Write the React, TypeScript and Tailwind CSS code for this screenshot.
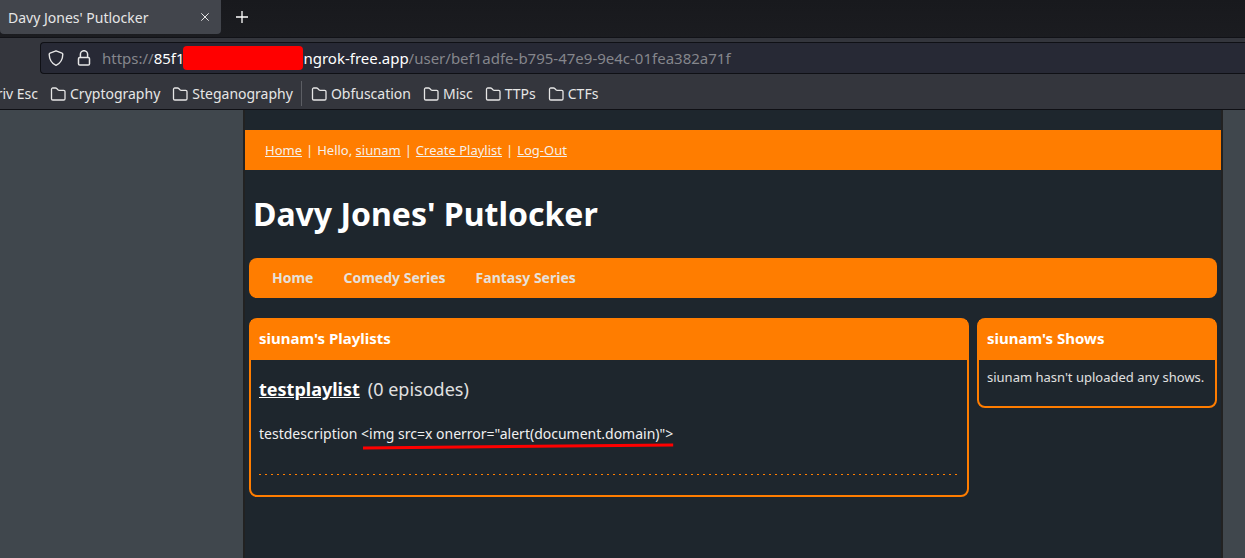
import type { ReactNode } from 'react';

function FolderIcon() {
  return (
    <svg className="h-4 w-4 shrink-0" viewBox="0 0 16 16" fill="none" stroke="currentColor" strokeWidth="1.300" strokeLinejoin="round" aria-hidden="true">
      <path d="M1.500 12.700V3.300A1.300 1.300 0 0 1 2.800 2h2.700c.5 0 .9.2 1.200.5L8.200 4c.2.3.6.4.9.4h4.600A1.300 1.300 0 0 1 15 5.700v7a1.300 1.300 0 0 1-1.300 1.300H2.800a1.300 1.300 0 0 1-1.300-1.300z" />
    </svg>
  );
}

function ShieldIcon() {
  return (
    <svg className="h-4 w-4" viewBox="0 0 16 16" fill="none" stroke="currentColor" strokeWidth="1.400" strokeLinejoin="round" aria-hidden="true">
      <path d="M8 .8 14 3.100c.5.2.8.6.8 1.100-.1 5-2 8.900-6.800 11.100C3.200 13.100 1.300 9.200 1.200 4.200c0-.5.3-.9.8-1.100z" />
    </svg>
  );
}

function LockIcon() {
  return (
    <svg className="h-4 w-4" viewBox="0 0 16 16" fill="none" stroke="currentColor" strokeWidth="1.500" aria-hidden="true">
      <path d="M4.400 7.500V4.300a3.600 3.600 0 0 1 7.200 0v3.200" />
      <rect x="2.500" y="7.500" width="11" height="7.500" rx="1.300" />
    </svg>
  );
}

function Bookmark({ children }: { children: ReactNode }) {
  return (
    <button type="button" className="flex items-center gap-1 whitespace-nowrap">
      <FolderIcon />
      {children}
    </button>
  );
}

function BrowserChrome() {
  return (
    <header className="text-[14px] text-[#e6e6e6]">
      <div className="flex h-[37px] items-start bg-linear-to-b from-[#18191d] to-[#1b1c20]">
        <div className="flex h-[34px] w-[221px] items-center justify-between rounded-b-sm bg-[#42454c] pr-2 pl-2">
          <span>Davy Jones' Putlocker</span>
          <button type="button" aria-label="Close tab" className="p-1">
            <svg className="h-2 w-2" viewBox="0 0 8 8" stroke="currentColor" strokeWidth="1" aria-hidden="true">
              <path d="M.3.3l7.400 7.400M7.700.3.3 7.700" />
            </svg>
          </button>
        </div>
        <button type="button" aria-label="New tab" className="ml-[15px] flex h-[34px] items-center">
          <svg className="h-3 w-3" viewBox="0 0 12 12" stroke="white" strokeWidth="1.300" aria-hidden="true">
            <path d="M6 0v12M0 6h12" />
          </svg>
        </button>
      </div>
      <div className="border-t border-[#111217] bg-[#34363d] pt-1 pl-10">
        <div className="flex h-8 items-center rounded-l border border-r-0 border-[#0f1015] bg-[#272935] pl-[7px]">
          <button type="button" aria-label="Tracking protection">
            <ShieldIcon />
          </button>
          <button type="button" aria-label="Connection secure" className="ml-3">
            <LockIcon />
          </button>
          <div className="ml-[10px] flex flex-1 items-center text-[15px] whitespace-nowrap text-[#85868c]">
            <label htmlFor="address" className="flex items-center">
              https://
              <span className="text-white">85f1-</span>
              <span className="-ml-1.5 h-6 w-[120px] rounded-sm bg-[#ff0000]" />
              <span className="text-white">ngrok-free.app</span>
            </label>
            <input
              id="address"
              type="text"
              defaultValue="/user/bef1adfe-b795-47e9-9e4c-01fea382a71f"
              className="min-w-0 flex-1 bg-transparent outline-none"
            />
          </div>
        </div>
      </div>
      <nav aria-label="Bookmarks" className="flex h-9 items-center gap-3 overflow-hidden border-b border-[#0f1015] bg-[#34363d] pt-1">
        <button type="button" className="flex w-[38px] justify-end whitespace-nowrap">
          riv Esc
        </button>
        <Bookmark>Cryptography</Bookmark>
        <Bookmark>Steganography</Bookmark>
        <div className="-mr-[3px] -ml-1 h-[25px] w-px bg-[#5c5e64]" />
        <Bookmark>Obfuscation</Bookmark>
        <Bookmark>Misc</Bookmark>
        <Bookmark>TTPs</Bookmark>
        <Bookmark>CTFs</Bookmark>
      </nav>
    </header>
  );
}

function Panel({ title, className, children }: { title: string; className: string; children: ReactNode }) {
  return (
    <section className={`rounded-lg border-2 border-[#ff7d00] ${className}`}>
      <h2 className="bg-[#ff7d00] px-2 pt-2 pb-3 text-[15px] leading-5 font-bold text-white">{title}</h2>
      {children}
    </section>
  );
}

export default function App() {
  return (
    <div className="flex min-h-screen flex-col bg-[#40474d] font-['Noto_Sans',sans-serif]">
      <BrowserChrome />
      <div className="flex flex-1">
        <div className="w-[243px] shrink-0" />
        <main className="min-w-0 flex-1 border-x-2 border-[#222222] bg-[#1e262d] pt-5 text-[#e0e0e0]">
          <div className="flex flex-wrap gap-1 bg-[#ff7d00] px-5 py-[10px] text-[13px] leading-5 text-[#f6f0ea]">
            <a href="#home" className="underline">Home</a>
            <span>|</span>
            <span>Hello, <a href="#siunam" className="underline">siunam</a></span>
            <span>|</span>
            <a href="#create" className="underline">Create Playlist</a>
            <span>|</span>
            <a href="#logout" className="underline">Log-Out</a>
          </div>
          <h1 className="px-2 py-5 text-[32px] leading-[48px] font-bold text-white">Davy Jones' Putlocker</h1>
          <nav aria-label="Main" className="mx-1 flex gap-[30px] rounded-lg bg-[#ff7d00] px-[23px] py-[10px] text-[14px] leading-5 font-bold text-[#e6e0da]">
            <a href="#home">Home</a>
            <a href="#comedy">Comedy Series</a>
            <a href="#fantasy">Fantasy Series</a>
          </nav>
          <div className="mx-1 mt-5 flex items-start gap-2">
            <Panel title="siunam's Playlists" className="min-w-0 flex-1">
              <div className="px-2 pt-[15px] pb-5">
                <h3 className="flex gap-2 text-[18px] leading-7">
                  <a href="#testplaylist" className="font-bold text-white underline">testplaylist</a>
                  <span>(0 episodes)</span>
                </h3>
                <p className="pt-[21px] pb-[30px] text-[14px] leading-5 text-[#f0f0f0]">
                  testdescription{' '}
                  <span className="relative inline-block">
                    {'<img src=x onerror="alert(document.domain)">'}
                    <svg className="absolute top-full left-0 h-1.5 w-full overflow-visible" viewBox="0 0 312 6" preserveAspectRatio="none" aria-hidden="true">
                      <path d="M2 4 312 1" stroke="#ff0000" strokeWidth="3" />
                    </svg>
                  </span>
                </p>
                <hr className="h-px border-0 bg-[repeating-linear-gradient(90deg,#ff7d00_0px,#ff7d00_2px,transparent_2px,transparent_6px)]" />
              </div>
            </Panel>
            <Panel title="siunam's Shows" className="w-60 shrink-0">
              <p className="px-2 pt-[7px] pb-[19px] text-[13px] leading-5">siunam hasn't uploaded any shows.</p>
            </Panel>
          </div>
        </main>
        <div className="w-[22px] shrink-0" />
      </div>
    </div>
  );
}
